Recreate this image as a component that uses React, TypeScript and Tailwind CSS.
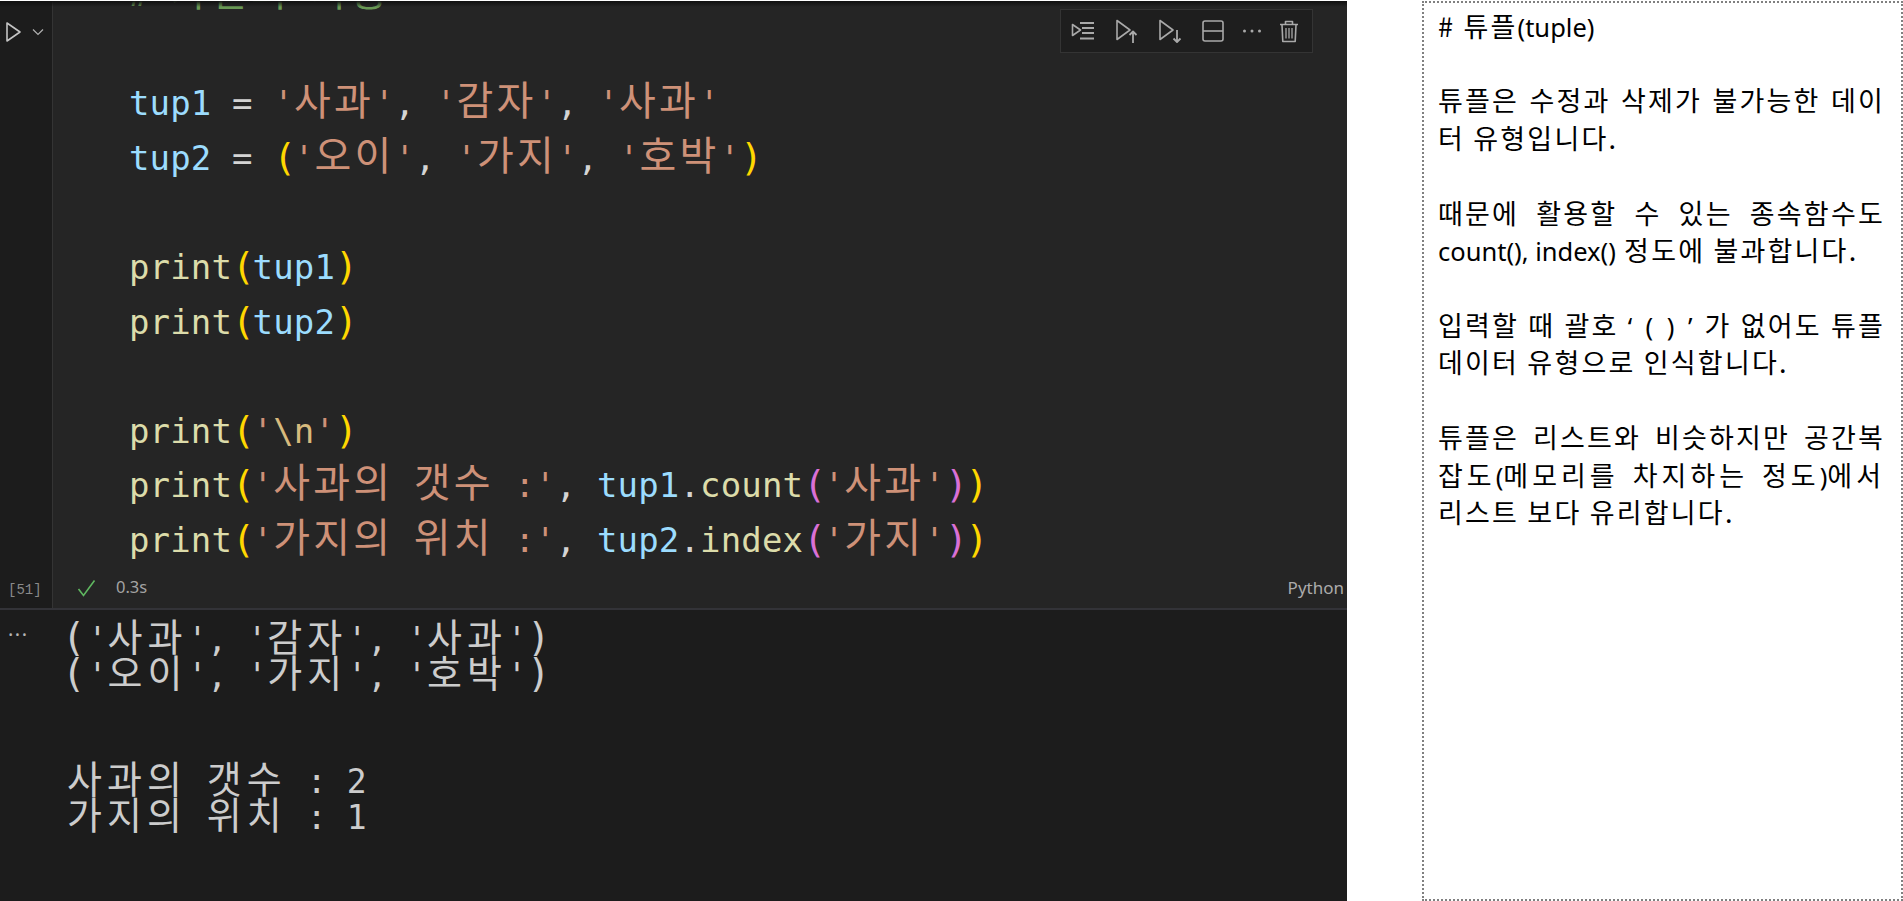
import React from "react"

const mono = "font-['DejaVu_Sans_Mono','Noto_Sans_CJK_KR',monospace]"
const korean = "font-['Noto_Sans_CJK_KR','Noto_Sans',sans-serif]"

// Hangul in the code cell takes two monospace cells
function K({ children }: { children: React.ReactNode }) {
    return <span className={`${korean} text-[40px] leading-none tracking-[3.2px]`}>{children}</span>
}

function Str({ children }: { children: React.ReactNode }) {
    return <span className="text-[#ce9178]">{children}</span>
}
function Fn({ children }: { children: React.ReactNode }) {
    return <span className="text-[#dcdcaa]">{children}</span>
}
function Var({ children }: { children: React.ReactNode }) {
    return <span className="text-[#9cdcfe]">{children}</span>
}
// brackets are tall in the editor font
function Gold({ children }: { children: React.ReactNode }) {
    return <span className="text-[38px] leading-none tracking-[-2.4px] text-[#ffd700]">{children}</span>
}
function Pink({ children }: { children: React.ReactNode }) {
    return <span className="text-[38px] leading-none tracking-[-2.4px] text-[#da70d6]">{children}</span>
}

function CodeLine({ children }: { children?: React.ReactNode }) {
    return <div className="h-[54.6px] whitespace-pre leading-[54.6px]">{children}</div>
}

function OutLine({ children }: { children?: React.ReactNode }) {
    return <div className="h-[35.5px] whitespace-pre leading-[35.5px]">{children}</div>
}

function OK({ children }: { children: React.ReactNode }) {
    return <span className={`${korean} text-[38px] leading-none tracking-[5px]`}>{children}</span>
}

function OpenP() {
    return <span className="-ml-[5px] text-[39px] leading-none tracking-[2px]">(</span>
}
function CloseP() {
    return <span className="text-[39px] leading-none tracking-[-3px]">)</span>
}

function NoteLine({ children, justify, wide }: { children?: React.ReactNode; justify?: boolean; wide?: boolean }) {
    return (
        <div
            className={`h-[37.45px] whitespace-pre-wrap leading-[37.45px] ${justify ? "[text-align-last:justify]" : ""} ${wide ? "tracking-[4px]" : ""}`}
        >
            {children}
        </div>
    )
}

function L({ children }: { children: React.ReactNode }) {
    return <span className="font-['Noto_Sans',sans-serif] text-[25.5px] tracking-normal">{children}</span>
}

function ToolIcon({ children, className }: { children: React.ReactNode; className?: string }) {
    return (
        <svg className={className} width="28" height="28" viewBox="0 0 28 28" fill="none" stroke="#a9a9a9" strokeWidth="1.6" strokeLinejoin="round">
            {children}
        </svg>
    )
}

function Toolbar() {
    return (
        <div className="absolute left-[1060px] top-[8px] flex h-[44px] w-[253px] items-center border border-[#343434] bg-[#1e1e1e] pl-[8px]">
            <ToolIcon>
                <path d="M3.5 7.5v11l8-5.5z" />
                <path d="M11 6h14M13 11h12M13 16h12M11 21.5h14" strokeWidth="1.8" />
            </ToolIcon>
            <ToolIcon className="ml-[16px]">
                <path d="M4 3.5v19l13-9.5z" />
                <path d="M20 26V14.5M16.5 18l3.5-3.5 3.5 3.5" strokeWidth="1.8" />
            </ToolIcon>
            <ToolIcon className="ml-[15px]">
                <path d="M4 3.5v19l13-9.5z" />
                <path d="M21 13v12M17.5 21.5L21 25l3.5-3.5" strokeWidth="1.8" />
            </ToolIcon>
            <ToolIcon className="ml-[15px]">
                <rect x="4" y="4" width="20" height="20" rx="2" />
                <path d="M4 14h20" />
            </ToolIcon>
            <ToolIcon className="ml-[11px]">
                <circle cx="6.5" cy="14" r="1.5" fill="#a9a9a9" stroke="none" />
                <circle cx="14" cy="14" r="1.5" fill="#a9a9a9" stroke="none" />
                <circle cx="21.5" cy="14" r="1.5" fill="#a9a9a9" stroke="none" />
            </ToolIcon>
            <ToolIcon className="ml-[9px]">
                <path d="M5 7.5h18M10.5 7V4.5h7V7" />
                <path d="M7 8l.8 16.5h12.4L21 8" />
                <path d="M11 11v10.5M14 11v10.5M17 11v10.5" strokeWidth="1.3" />
            </ToolIcon>
        </div>
    )
}

function Gutter() {
    return (
        <div className="flex w-[52px] shrink-0 flex-col justify-between bg-[#1c1c1c] pb-[8px] pl-[8px]">
            <div className="-ml-[4px] mt-[20px] flex items-center gap-[8px]">
                <svg width="20" height="22" viewBox="0 0 20 22" fill="none" stroke="#c4c4c4" strokeWidth="1.6" strokeLinejoin="round">
                    <path d="M3 2v18l13-9z" />
                </svg>
                <svg width="12" height="8" viewBox="0 0 12 8" fill="none" stroke="#b0b0b0" strokeWidth="1.2">
                    <path d="M1 1.5l5 5 5-5" />
                </svg>
            </div>
            <div className={`font-['Liberation_Mono',monospace] text-[14px] leading-[20px] text-[#8a8a8a]`}>[51]</div>
        </div>
    )
}

function CodeCell() {
    return (
        <div className="relative flex h-[607px] shrink-0 overflow-hidden">
            <Gutter />
            <div className="flex flex-1 flex-col border-l border-[#343434] bg-[#252525]">
                <div className={`${mono} -mt-[34px] pl-[76px] text-[34px] tracking-[0.15px] text-[#d4d4d4]`}>
                    <CodeLine>
                        <span className="text-[#6a9955]">
                            # <K>가변의</K> <K>사용</K>
                        </span>
                    </CodeLine>
                    <CodeLine />
                    <CodeLine>
                        <Var>tup1</Var> = <Str>'<K>사과</K>'</Str>, <Str>'<K>감자</K>'</Str>, <Str>'<K>사과</K>'</Str>
                    </CodeLine>
                    <CodeLine>
                        <Var>tup2</Var> = <Gold>(</Gold>
                        <Str>'<K>오이</K>'</Str>, <Str>'<K>가지</K>'</Str>, <Str>'<K>호박</K>'</Str>
                        <Gold>)</Gold>
                    </CodeLine>
                    <CodeLine />
                    <CodeLine>
                        <Fn>print</Fn>
                        <Gold>(</Gold>
                        <Var>tup1</Var>
                        <Gold>)</Gold>
                    </CodeLine>
                    <CodeLine>
                        <Fn>print</Fn>
                        <Gold>(</Gold>
                        <Var>tup2</Var>
                        <Gold>)</Gold>
                    </CodeLine>
                    <CodeLine />
                    <CodeLine>
                        <Fn>print</Fn>
                        <Gold>(</Gold>
                        <Str>'</Str>
                        <span className="text-[#d7ba7d]">\n</span>
                        <Str>'</Str>
                        <Gold>)</Gold>
                    </CodeLine>
                    <CodeLine>
                        <Fn>print</Fn>
                        <Gold>(</Gold>
                        <Str>
                            '<K>사과의</K> <K>갯수</K> :'
                        </Str>
                        , <Var>tup1</Var>.<Fn>count</Fn>
                        <Pink>(</Pink>
                        <Str>'<K>사과</K>'</Str>
                        <Pink>)</Pink>
                        <Gold>)</Gold>
                    </CodeLine>
                    <CodeLine>
                        <Fn>print</Fn>
                        <Gold>(</Gold>
                        <Str>
                            '<K>가지의</K> <K>위치</K> :'
                        </Str>
                        , <Var>tup2</Var>.<Fn>index</Fn>
                        <Pink>(</Pink>
                        <Str>'<K>가지</K>'</Str>
                        <Pink>)</Pink>
                        <Gold>)</Gold>
                    </CodeLine>
                </div>
                <div className="flex h-[40px] items-center pl-[24px] pr-[3px]">
                    <svg width="20" height="18" viewBox="0 0 20 18" fill="none" stroke="#5fb760" strokeWidth="1.6">
                        <path d="M1.5 10l5 6.5L17.5 1.5" />
                    </svg>
                    <span className="ml-[19px] font-['Noto_Sans',sans-serif] text-[16.5px] text-[#a3a3a3]">0.3s</span>
                    <span className="ml-auto font-['Noto_Sans',sans-serif] text-[17px] text-[#ababab]">Python</span>
                </div>
            </div>
            <Toolbar />
            <div className="absolute inset-x-0 top-0 h-[6px] bg-gradient-to-b from-[#101010] to-transparent" />
        </div>
    )
}

function Output() {
    return (
        <div className="flex flex-1 border-t-2 border-[#333338] bg-[#1c1c1c]">
            <div className="w-[67px] shrink-0 pl-[8px] pt-[9px] text-[20px] leading-[20px] tracking-[1.5px] text-[#b5b5b5]">...</div>
            <div className={`${mono} pt-[6px] text-[33px] tracking-[0.1px] text-[#cccccc]`}>
                <OutLine>
                    <OpenP />'<OK>사과</OK>', '<OK>감자</OK>', '<OK>사과</OK>'<CloseP />
                </OutLine>
                <OutLine>
                    <OpenP />'<OK>오이</OK>', '<OK>가지</OK>', '<OK>호박</OK>'<CloseP />
                </OutLine>
                <OutLine />
                <OutLine />
                <OutLine>
                    <OK>사과의</OK> <OK>갯수</OK> : 2
                </OutLine>
                <OutLine>
                    <OK>가지의</OK> <OK>위치</OK> : 1
                </OutLine>
            </div>
        </div>
    )
}

function NotesPanel() {
    return (
        <div className={`${korean} ml-[75px] mt-px h-[900px] w-[481px] border-2 border-dotted border-[#808080] bg-white pl-[14px] pr-[16px] pt-[3.5px] text-[27px] tracking-[2.2px] text-black`}>
            <NoteLine>
                # 튜플<L>(tuple)</L>
            </NoteLine>
            <NoteLine />
            <NoteLine justify>튜플은 수정과 삭제가 불가능한 데이</NoteLine>
            <NoteLine>터 유형입니다.</NoteLine>
            <NoteLine />
            <NoteLine justify>때문에 활용할 수 있는 종속함수도</NoteLine>
            <NoteLine>
                <L>count(), index()</L> 정도에 불과합니다.
            </NoteLine>
            <NoteLine />
            <NoteLine justify>
                입력할 때 괄호 <span className="font-['Noto_Sans',sans-serif] text-[25.5px] tracking-[3px]">‘ ( ) ’</span> 가 없어도 튜플
            </NoteLine>
            <NoteLine>데이터 유형으로 인식합니다.</NoteLine>
            <NoteLine />
            <NoteLine justify>튜플은 리스트와 비슷하지만 공간복</NoteLine>
            <NoteLine justify wide>
                잡도<L>(</L>메모리를 차지하는 정도<L>)</L>에서
            </NoteLine>
            <NoteLine>리스트 보다 유리합니다.</NoteLine>
        </div>
    )
}

export default function App() {
    return (
        <div className="flex h-[901px] overflow-hidden bg-white">
            <div className="mt-px flex h-[900px] w-[1347px] shrink-0 flex-col">
                <CodeCell />
                <Output />
            </div>
            <NotesPanel />
        </div>
    )
}
